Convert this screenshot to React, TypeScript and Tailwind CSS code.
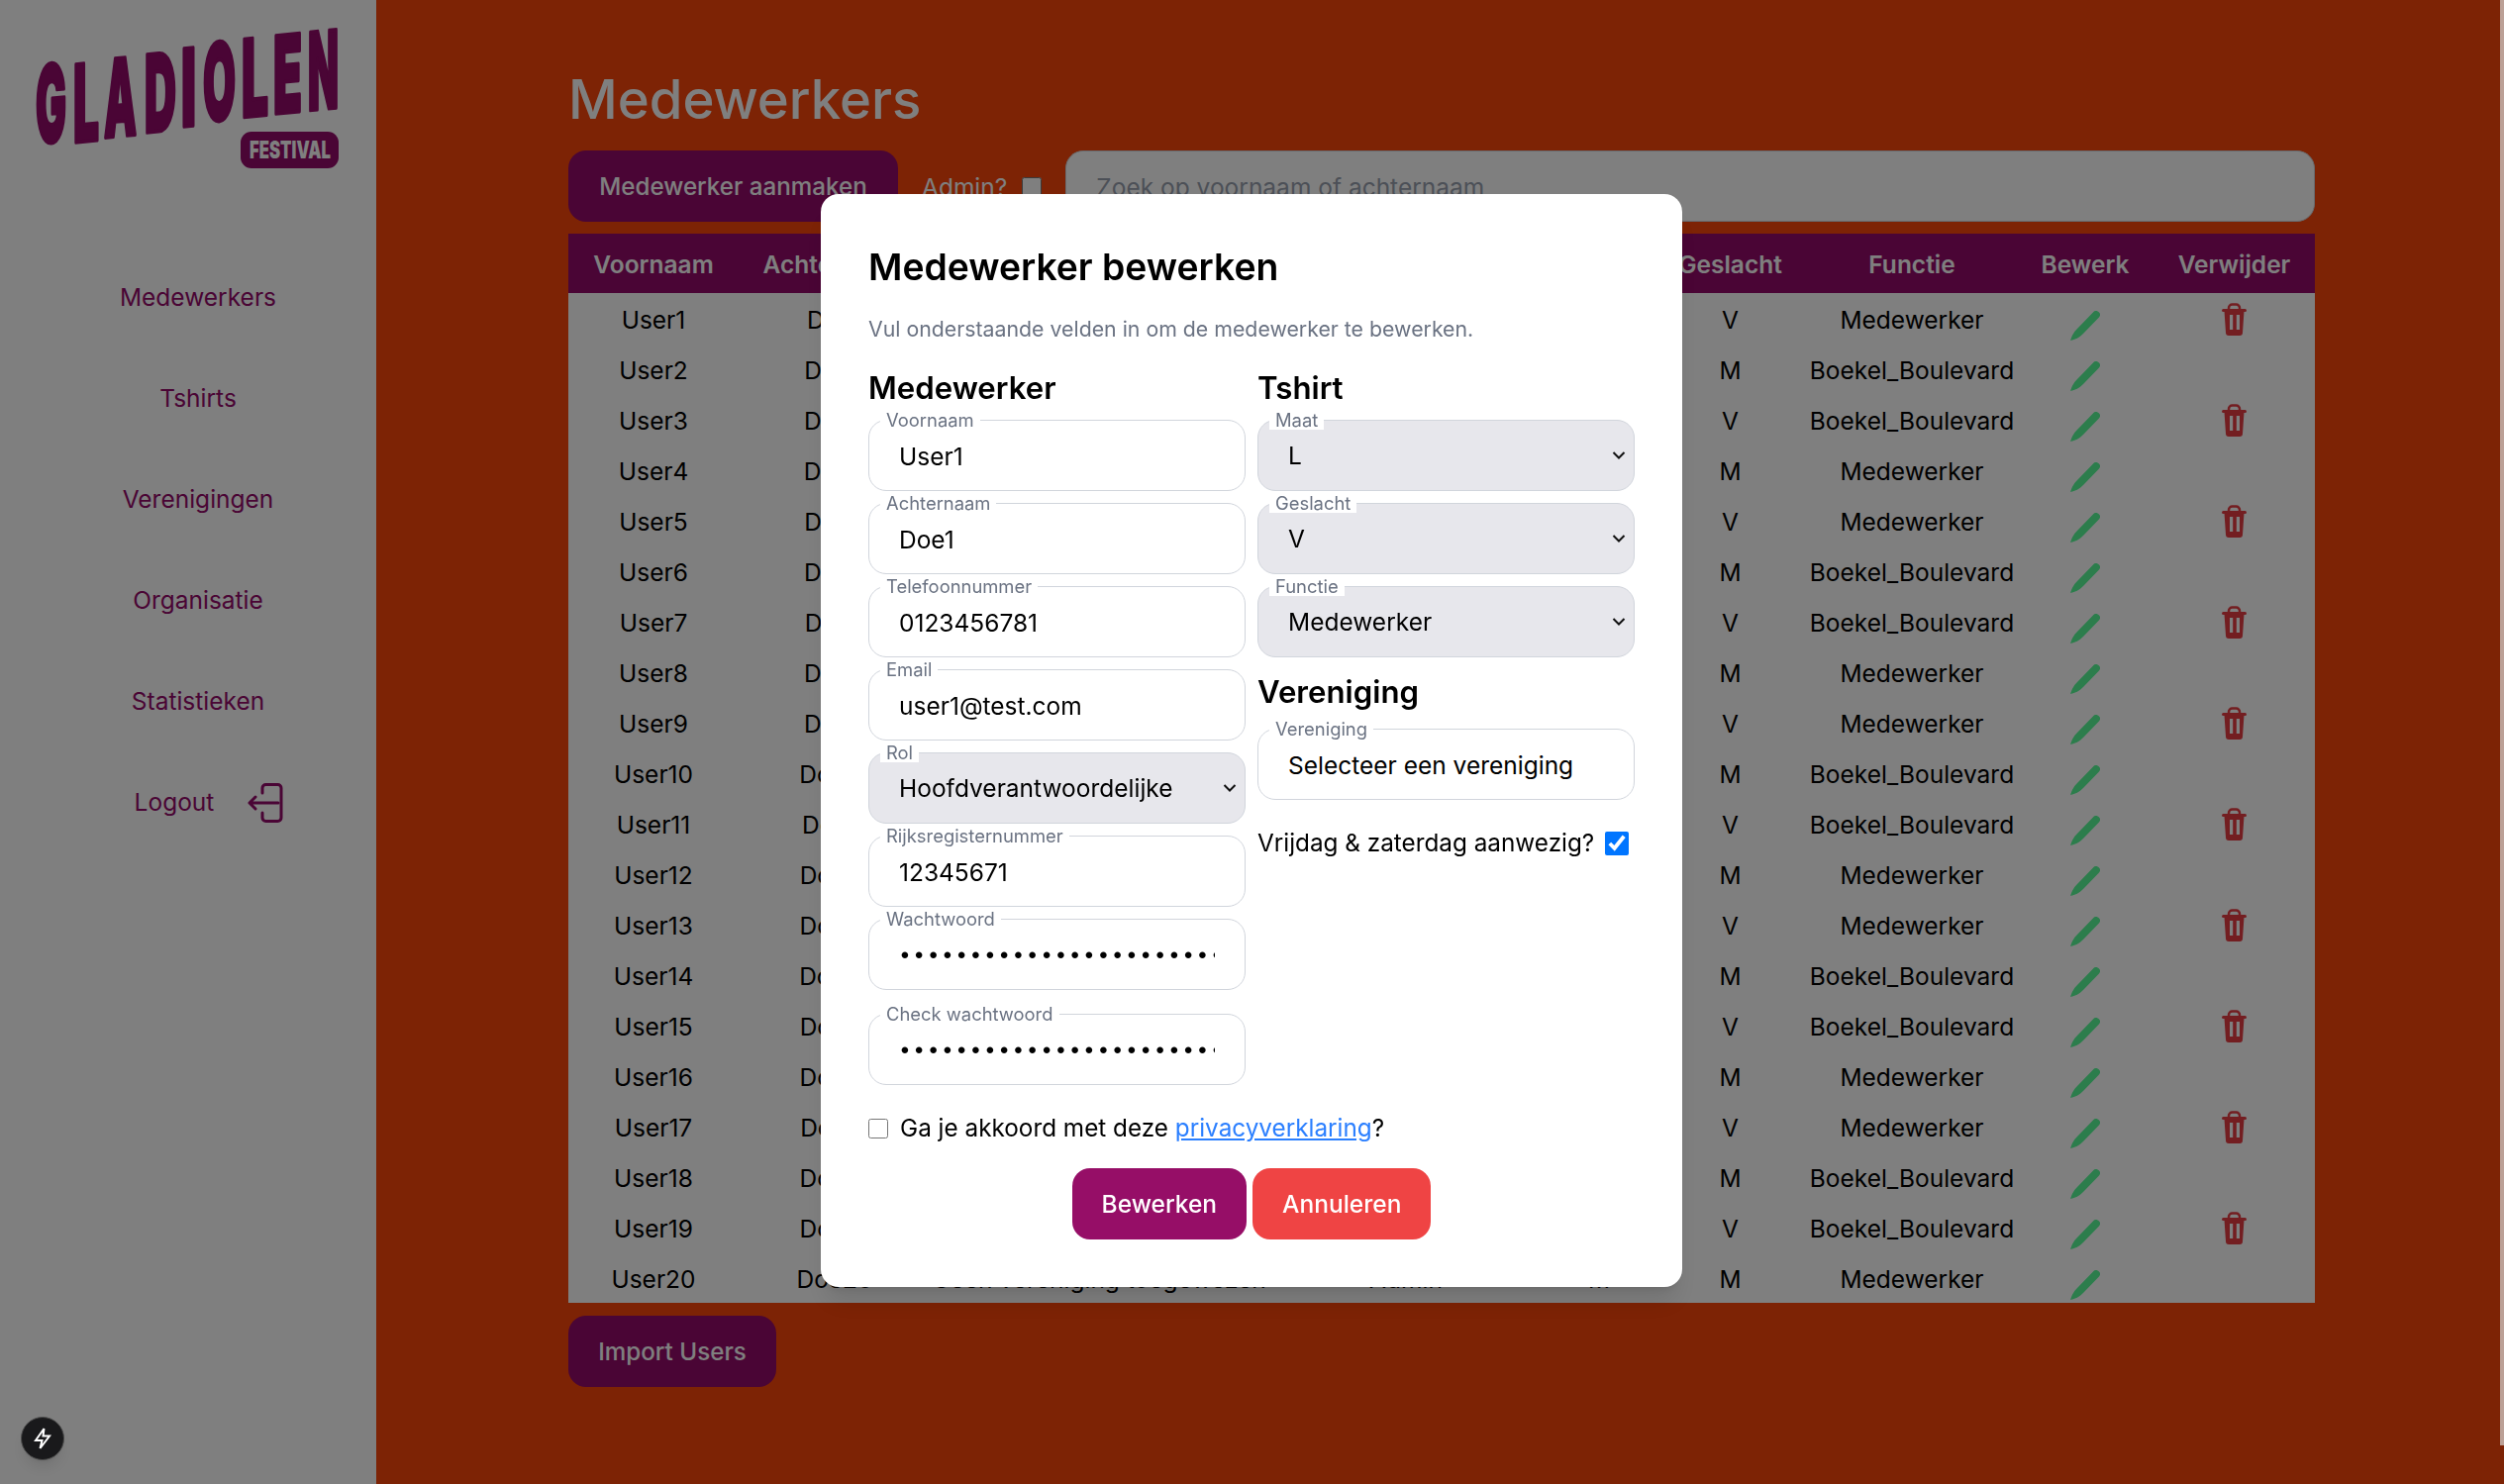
import type { ReactNode } from "react";

const navItems = ["Medewerkers", "Tshirts", "Verenigingen", "Organisatie", "Statistieken"];

const users = Array.from({ length: 20 }, (_, i) => {
  const n = i + 1;
  return {
    first: `User${n}`,
    last: `Doe${n}`,
    gender: n % 2 === 1 ? "V" : "M",
    role: n % 4 === 2 || n % 4 === 3 ? "Boekel_Boulevard" : "Medewerker",
    canDelete: n % 2 === 1,
  };
});

const columns = [
  { name: "Voornaam", width: "w-[172px]" },
  { name: "Achternaam", width: "w-[194px]" },
  { name: "Vereniging", width: "w-[340px]" },
  { name: "Rol", width: "w-[280px]" },
  { name: "Maat", width: "w-[110px]" },
  { name: "Geslacht", width: "w-[155px]" },
  { name: "Functie", width: "w-[212px]" },
  { name: "Bewerk", width: "w-[138px]" },
  { name: "Verwijder", width: "w-[163px]" },
];

const logoLetters = [
  { c: "G", x: 36, w: 31, y: 145 },
  { c: "L", x: 74, w: 26, y: 144 },
  { c: "A", x: 105, w: 33, y: 139 },
  { c: "D", x: 146, w: 32, y: 134 },
  { c: "I", x: 183, w: 15, y: 128 },
  { c: "O", x: 205, w: 33, y: 123 },
  { c: "L", x: 244, w: 27, y: 118.5 },
  { c: "E", x: 276, w: 29, y: 115 },
  { c: "N", x: 311, w: 31, y: 111.5 },
];

function Logo() {
  return (
    <svg width="380" height="249" viewBox="0 0 380 249" className="block shrink-0">
      {logoLetters.map((l, i) => (
        <text
          key={i}
          transform={`translate(${l.x} ${l.y}) skewY(-5.5)`}
          fontFamily="Inter, sans-serif"
          fontWeight="900"
          fontSize="108"
          fill="#940a6a"
          stroke="#940a6a"
          strokeWidth="4"
          strokeLinejoin="round"
          textLength={l.w}
          lengthAdjust="spacingAndGlyphs"
        >
          {l.c}
        </text>
      ))}
      <rect x="243" y="133" width="99" height="37" rx="11" fill="#940a6a" />
      <text
        x="252"
        y="160"
        fontFamily="Inter, sans-serif"
        fontWeight="900"
        fontSize="24"
        fill="#ffffff"
        textLength="82"
        lengthAdjust="spacingAndGlyphs"
      >
        FESTIVAL
      </text>
    </svg>
  );
}

function LogoutIcon() {
  return (
    <svg width="38" height="40" viewBox="0 0 38 40" fill="none" stroke="#940a6a" strokeWidth="3" strokeLinecap="round" strokeLinejoin="round">
      <path d="M15 10V5a3.5 3.5 0 0 1 3.5-3.5h12A3.5 3.5 0 0 1 34 5v30a3.5 3.5 0 0 1-3.5 3.5h-12A3.5 3.5 0 0 1 15 35v-5" />
      <path d="M31 20H2M8 14l-6 6 6 6" />
    </svg>
  );
}

function Pencil() {
  return (
    <svg width="30" height="30" viewBox="0 0 30 30" className="mx-auto mt-[15px] block">
      <path d="M0 30C2 24 4 21 7 18L23 1.5A3.8 3.8 0 0 1 29 6.5L13 23C9 27 5 29 0 30Z" fill="#58fa98" />
    </svg>
  );
}

function Trash() {
  return (
    <svg width="25" height="33" viewBox="0 0 25 33" className="mx-auto mt-[2px] block">
      <path d="M7 7V5a3.5 3.5 0 0 1 3.5-3.5h4A3.5 3.5 0 0 1 18 5v2" fill="none" stroke="#e63c43" strokeWidth="2.5" />
      <rect x="0" y="6" width="25" height="3" rx="1.5" fill="#e63c43" />
      <path
        fillRule="evenodd"
        d="M2.5 8h20l-1.5 22a3 3 0 0 1-3 3H7a3 3 0 0 1-3-3ZM8 12v15h3.2V12ZM14.8 12v15H18V12Z"
        fill="#e63c43"
      />
    </svg>
  );
}

function Field({ label, children }: { label: string; children: ReactNode }) {
  return (
    <div className="relative">
      <span className="absolute -top-[10px] left-3 z-10 bg-white px-1.5 text-[18.4px] leading-[20px] text-gray-500">{label}</span>
      {children}
    </div>
  );
}

function TextField({ label, value, type = "text" }: { label: string; value: string; type?: string }) {
  const isPassword = type === "password";
  return (
    <Field label={label}>
      <input
        type={type}
        value={value}
        readOnly
        className={
          isPassword
            ? "block h-[72px] w-full rounded-[18px] border-[1.5px] border-gray-300 bg-white px-[30px] text-[21px] tracking-[2.5px] text-black outline-none"
            : "block h-[72px] w-full rounded-[18px] border-[1.5px] border-gray-300 bg-white px-[30px] pt-[2px] text-[24.5px] text-black outline-none"
        }
      />
    </Field>
  );
}

function SelectField({ label, value }: { label: string; value: string }) {
  return (
    <Field label={label}>
      <select
        value={value}
        onChange={() => {}}
        className="block h-[72px] w-full appearance-none rounded-[18px] border-[1.5px] border-gray-300 bg-[#e7e7ec] px-[30px] pt-[2px] text-[24.5px] text-black outline-none"
      >
        <option>{value}</option>
      </select>
      <svg
        width="14"
        height="10"
        viewBox="0 0 14 10"
        fill="none"
        stroke="#111"
        strokeWidth="2"
        className="pointer-events-none absolute right-[9px] top-[31px]"
      >
        <path d="M1.5 2 7 7.5 12.5 2" />
      </svg>
    </Field>
  );
}

function EditModal() {
  return (
    <div className="fixed inset-0 z-20 flex items-center justify-center bg-black/50 pb-1 pr-px">
      <div className="w-[870px] rounded-[18px] bg-white px-12 pb-12 pt-[51px] text-black shadow-xl">
        <h2 className="text-[37.3px] font-semibold leading-[45px]">Medewerker bewerken</h2>
        <p className="mt-[25px] text-[21.3px] leading-[30px] text-gray-500">Vul onderstaande velden in om de medewerker te bewerken.</p>
        <div className="mt-[27px] grid grid-cols-2 gap-3">
          <div>
            <h3 className="mb-[14px] text-[31.2px] font-semibold leading-[36px]">Medewerker</h3>
            <div className="flex flex-col gap-3">
              <TextField label="Voornaam" value="User1" />
              <TextField label="Achternaam" value="Doe1" />
              <TextField label="Telefoonnummer" value="0123456781" />
              <TextField label="Email" value="user1@test.com" />
              <SelectField label="Rol" value="Hoofdverantwoordelijke" />
              <TextField label="Rijksregisternummer" value="12345671" />
              <TextField label="Wachtwoord" type="password" value="passwordpasswordpasswordpasswordpassword" />
              <div className="mt-3">
                <TextField label="Check wachtwoord" type="password" value="passwordpasswordpasswordpasswordpassword" />
              </div>
            </div>
          </div>
          <div>
            <h3 className="mb-[14px] text-[31.2px] font-semibold leading-[36px]">Tshirt</h3>
            <div className="flex flex-col gap-3">
              <SelectField label="Maat" value="L" />
              <SelectField label="Geslacht" value="V" />
              <SelectField label="Functie" value="Medewerker" />
            </div>
            <h3 className="mb-[19px] mt-[17px] text-[31.2px] font-semibold leading-[36px]">Vereniging</h3>
            <Field label="Vereniging">
              <button className="block h-[72px] w-full rounded-[18px] border-[1.5px] border-gray-300 bg-white px-[30px] pt-1 text-left text-[24.5px]">
                Selecteer een vereniging
              </button>
            </Field>
            <label className="mt-[30px] flex h-7 items-center gap-[11px] text-[24.3px]">
              Vrijdag &amp; zaterdag aanwezig?
              <input type="checkbox" checked readOnly className="h-6 w-6 accent-[#0075ff]" />
            </label>
          </div>
        </div>
        <label className="mt-[29px] flex h-[30px] items-center gap-3 text-[24.3px]">
          <input type="checkbox" readOnly className="m-0 h-5 w-5" />
          <span>
            Ga je akkoord met deze <a className="text-blue-500 underline">privacyverklaring</a>?
          </span>
        </label>
        <div className="mt-[25px] flex justify-center gap-1.5">
          <button className="h-[72px] rounded-[18px] bg-[#960e67] px-[30px] pt-[2px] text-[24.5px] font-medium text-white">Bewerken</button>
          <button className="h-[72px] rounded-[18px] bg-[#ef4444] px-[30px] pt-[2px] text-[24.5px] font-medium text-white">Annuleren</button>
        </div>
      </div>
    </div>
  );
}

export default function App() {
  return (
    <div className="flex h-[1499px] overflow-hidden bg-[#fa460a] font-[Inter,sans-serif] text-[24.5px] text-black">
      <aside className="flex w-[380px] shrink-0 flex-col bg-white text-[#940a6a]">
        <Logo />
        <nav className="flex flex-col pl-5">
          {navItems.map((item) => (
            <a key={item} className="flex h-[102px] items-center justify-center pt-px">
              {item}
            </a>
          ))}
          <a className="flex h-[102px] items-center justify-center gap-[34px] pl-[24px] pt-px">
            Logout
            <LogoutIcon />
          </a>
        </nav>
      </aside>

      <main className="min-w-0 flex-1 pl-[194px] pr-[191px] pt-16">
        <h1 className="mb-4 text-[54.5px] font-medium leading-[72px] text-white">Medewerkers</h1>
        <div className="flex h-[72px] items-center">
          <button className="h-[72px] w-[333px] shrink-0 rounded-[18px] bg-[#940a6a] pt-[2px] text-[24.2px] font-medium text-white">
            Medewerker aanmaken
          </button>
          <label className="ml-[24px] flex items-center gap-[15px] pt-[2px] text-white">
            Admin?
            <input type="checkbox" readOnly className="m-0 h-5 w-5" />
          </label>
          <input
            placeholder="Zoek op voornaam of achternaam"
            className="ml-6 h-[72px] min-w-0 flex-1 rounded-[18px] border-[1.5px] border-gray-300 bg-white px-[30px] pt-[2px] outline-none placeholder:text-gray-400"
          />
        </div>

        <table className="mt-3 w-[1764px] table-fixed whitespace-nowrap bg-white text-center">
          <colgroup>
            {columns.map((col) => (
              <col key={col.name} className={col.width} />
            ))}
          </colgroup>
          <thead>
            <tr className="h-[60px] bg-[#940a6a] text-white">
              {columns.map((col) => (
                <th key={col.name} className="p-0 pt-[2px] font-semibold">
                  {col.name}
                </th>
              ))}
            </tr>
          </thead>
          <tbody>
            {users.map((u) => (
              <tr key={u.first} className="h-[51px]">
                <td className="p-0 pt-[3px]">{u.first}</td>
                <td className="p-0 pt-[3px]">{u.last}</td>
                <td className="p-0 pt-[3px]">Geen vereniging toegewezen</td>
                <td className="p-0 pt-[3px]">Admin</td>
                <td className="p-0 pt-[3px]">M</td>
                <td className="p-0 pt-[3px]">{u.gender}</td>
                <td className="p-0 pt-[3px]">{u.role}</td>
                <td className="p-0">
                  <Pencil />
                </td>
                <td className="p-0">{u.canDelete && <Trash />}</td>
              </tr>
            ))}
          </tbody>
        </table>

        <button className="mt-[13px] h-[72px] w-[210px] rounded-[18px] bg-[#940a6a] pt-[2px] text-[24.2px] font-medium text-white">Import Users</button>
      </main>

      <EditModal />

      <div className="fixed left-[21px] top-[1431px] z-30 flex h-[44px] w-[44px] items-center justify-center rounded-full border border-[#4a4a4a] bg-[#19191b] shadow-lg">
        <svg width="22" height="24" viewBox="0 0 22 24" fill="none" stroke="#fff" strokeWidth="2" strokeLinejoin="miter">
          <path d="M12.5 2 4 14h6.5L8.5 22 18 9.5h-6.5l1-7.5Z" />
        </svg>
      </div>
      <div className="fixed right-0 top-0 z-30 h-[1460px] w-1 bg-[#bba096]" />
    </div>
  );
}
